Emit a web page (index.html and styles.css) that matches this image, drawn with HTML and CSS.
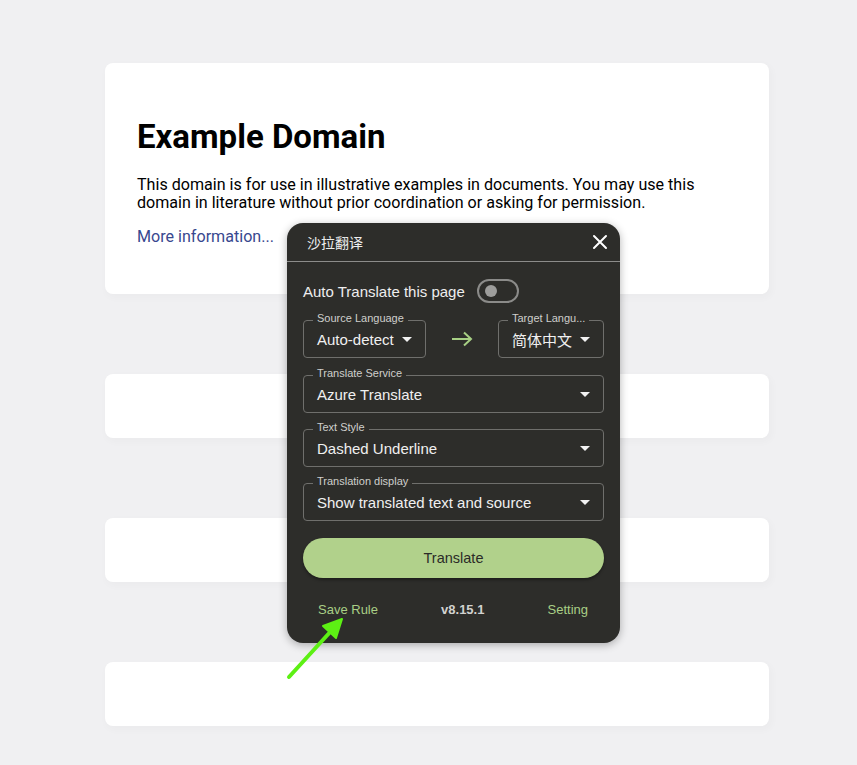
FILE: index.html
```html
<!doctype html>
<html lang="zh">
<head>
    <meta charset="utf-8">
    <title>Example Domain</title>
    <link rel="stylesheet" href="styles.css">
</head>
<body>
<div class="page">
    <div class="card main">
        <h1>Example Domain</h1>
        <p>This domain is for use in illustrative examples in documents. You may use this
            domain in literature without prior coordination or asking for permission.</p>
        <p><a href="#">More information...</a></p>
    </div>
    <div class="card"></div>
    <div class="card"></div>
    <div class="card"></div>
</div>

<div class="popup">
    <div class="popup-head">
        <span class="popup-title">沙拉翻译</span>
        <svg class="close" width="16" height="16" viewBox="0 0 16 16">
            <path d="M2 2L14 14M14 2L2 14" stroke="#fff" stroke-width="2" stroke-linecap="round"/>
        </svg>
    </div>
    <div class="popup-body">
        <div class="auto-row">
            <span>Auto Translate this page</span>
            <span class="toggle"><span class="knob"></span></span>
        </div>

        <div class="lang-row">
            <div class="field small">
                <span class="label">Source Language</span>
                <span class="value">Auto-detect</span>
                <span class="caret"></span>
            </div>
            <svg class="swap" width="24" height="16" viewBox="0 0 24 16">
                <path d="M2 8H21M14 1.5L21 8L14 14.5" fill="none" stroke="#a7cf84" stroke-width="2"/>
            </svg>
            <div class="field target">
                <span class="label">Target Langu...</span>
                <span class="value">简体中文</span>
                <span class="caret"></span>
            </div>
        </div>

        <div class="field">
            <span class="label">Translate Service</span>
            <span class="value">Azure Translate</span>
            <span class="caret"></span>
        </div>
        <div class="field">
            <span class="label">Text Style</span>
            <span class="value">Dashed Underline</span>
            <span class="caret"></span>
        </div>
        <div class="field">
            <span class="label">Translation display</span>
            <span class="value">Show translated text and source</span>
            <span class="caret"></span>
        </div>

        <button class="translate">Translate</button>

        <div class="popup-foot">
            <a href="#" class="green">Save Rule</a>
            <span class="version">v8.15.1</span>
            <a href="#" class="green">Setting</a>
        </div>
    </div>
</div>

<!-- стрелка-пометка поверх скриншота -->
<svg class="pointer" width="70" height="70" viewBox="0 0 70 70">
    <path d="M3 60L46 13" stroke="#5df014" stroke-width="4" stroke-linecap="round"/>
    <path d="M56 2L37 9L50 21Z" fill="#5df014" stroke="#5df014" stroke-width="2" stroke-linejoin="round"/>
</svg>
</body>
</html>
```

FILE: styles.css
```css
body {
    margin: 0;
    background-color: #f0f0f2;
    font-family: Roboto, "Liberation Sans", sans-serif;
}
.page {
    padding: 63px 0 40px 105px;
    display: flex;
    flex-direction: column;
    gap: 80px;
}
.card {
    width: 664px;
    height: 64px;
    background-color: #fff;
    border-radius: 8px;
    box-shadow: 2px 3px 7px 2px rgba(0, 0, 0, 0.02);
}
.card.main {
    height: auto;
    box-sizing: border-box;
    padding: 32px;
}
h1 {
    font-size: 33px;
    font-weight: bold;
    margin: 23px 0 21px 0;
    line-height: 37px;
}
p {
    font-size: 16.1px;
    line-height: 18px;
    margin: 16px 0;
}
a {
    color: #38488f;
    text-decoration: none;
}

.popup {
    position: absolute;
    left: 287px;
    top: 223px;
    width: 333px;
    height: 420px;
    background-color: #2d2d2a;
    border-radius: 16px;
    box-shadow: 0 2px 8px rgba(0, 0, 0, 0.3);
    font-family: "Liberation Sans", Arial, "Noto Sans CJK SC", sans-serif;
    color: #eee;
}
.popup-head {
    height: 38px;
    border-bottom: 1px solid #8c8c8a;
    display: flex;
    align-items: center;
    justify-content: space-between;
    padding: 0 12px 0 20px;
}
.popup-title {
    font-family: "Noto Sans CJK SC", sans-serif;
    font-size: 14px;
    color: #eee;
}
.popup-body {
    padding: 16px 16px 0 16px;
    display: flex;
    flex-direction: column;
}
.auto-row {
    display: flex;
    align-items: center;
    gap: 12px;
    font-size: 15px;
    height: 26px;
    margin-bottom: 16px;
}
.toggle {
    height: 20px;
    border: 2px solid #8b8b89;
    border-radius: 12px;
    display: flex;
    align-items: center;
    padding-left: 6px;
    box-sizing: content-box;
    width: 32px;
}
.knob {
    width: 12px;
    height: 12px;
    border-radius: 50%;
    background-color: #9d9d9b;
}
.lang-row {
    display: flex;
    align-items: center;
    justify-content: space-between;
    margin-bottom: 17px;
}
.field {
    position: relative;
    height: 38px;
    box-sizing: border-box;
    border: 1px solid #6f6f6c;
    border-radius: 4px;
    display: flex;
    align-items: center;
    padding: 0 13px;
    margin-bottom: 16px;
    font-size: 15px;
    color: #f0f0f0;
}
.lang-row .field {
    margin-bottom: 0;
}
.field.small {
    width: 123px;
}
.field.target {
    width: 106px;
}
.target .value {
    font-family: "Noto Sans CJK SC", sans-serif;
}
.label {
    position: absolute;
    top: -10px;
    left: 9px;
    padding: 0 4px;
    background-color: #2d2d2a;
    font-size: 11px;
    line-height: 14px;
    color: #cfcfcc;
    white-space: nowrap;
}
.value {
    flex: 1;
    white-space: nowrap;
}
.caret {
    width: 0;
    height: 0;
    border-left: 5px solid transparent;
    border-right: 5px solid transparent;
    border-top: 5px solid #f2f2f2;
}
.swap {
    margin: 0 8px;
}
.translate {
    height: 40px;
    border: none;
    border-radius: 20px;
    background-color: #b1d18b;
    color: #2b2b28;
    font-family: "Liberation Sans", Arial, sans-serif;
    font-size: 14.5px;
    margin-top: 1px;
    box-shadow: 0 2px 3px rgba(0, 0, 0, 0.35);
}
.popup-foot {
    display: flex;
    justify-content: space-between;
    align-items: center;
    padding: 0 16px 0 15px;
    margin-top: 24px;
    font-size: 13px;
}
.popup-foot .green {
    color: #a9cf86;
}
.version {
    color: #d2d2d0;
    font-weight: bold;
}

.pointer {
    position: absolute;
    left: 286px;
    top: 617px;
}
```
